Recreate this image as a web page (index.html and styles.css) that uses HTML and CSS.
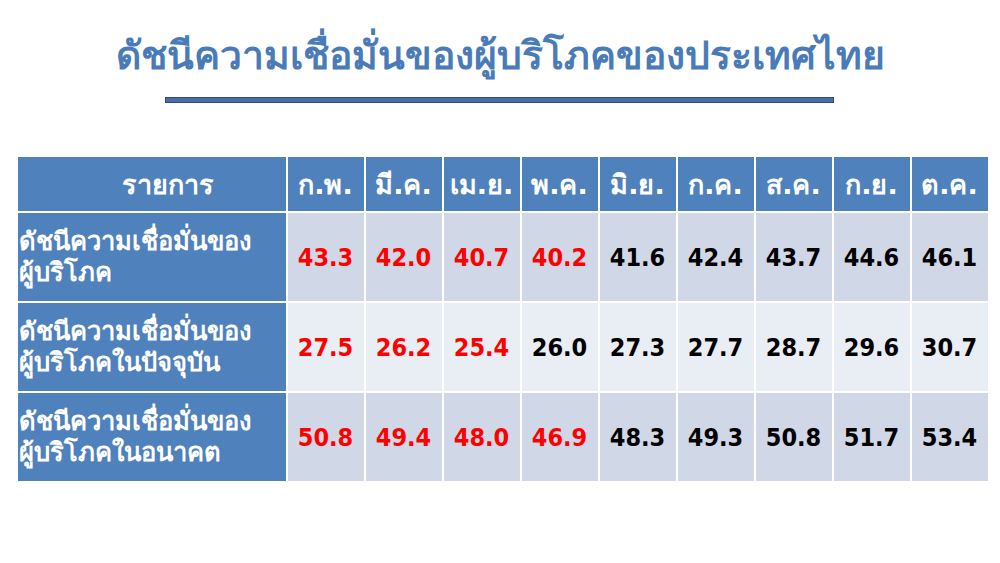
FILE: index.html
```html
<!DOCTYPE html>
<html lang="th">
<head>
<meta charset="utf-8">
<link rel="stylesheet" href="styles.css">
</head>
<body>
<div class="slide">
  <h1 class="title">ดัชนีความเชื่อมั่นของผู้บริโภคของประเทศไทย</h1>
  <div class="rule"></div>
  <table class="grid">
    <thead>
      <tr>
        <th class="label">รายการ</th>
        <th>ก.พ.</th><th>มี.ค.</th><th>เม.ย.</th><th>พ.ค.</th><th>มิ.ย.</th><th>ก.ค.</th><th>ส.ค.</th><th>ก.ย.</th><th>ต.ค.</th>
      </tr>
    </thead>
    <tbody>
      <tr class="dark">
        <th class="label">ดัชนีความเชื่อมั่นของ<br>ผู้บริโภค</th>
        <td class="red">43.3</td><td class="red">42.0</td><td class="red">40.7</td><td class="red">40.2</td><td>41.6</td><td>42.4</td><td>43.7</td><td>44.6</td><td>46.1</td>
      </tr>
      <tr class="light">
        <th class="label">ดัชนีความเชื่อมั่นของ<br>ผู้บริโภคในปัจจุบัน</th>
        <td class="red">27.5</td><td class="red">26.2</td><td class="red">25.4</td><td>26.0</td><td>27.3</td><td>27.7</td><td>28.7</td><td>29.6</td><td>30.7</td>
      </tr>
      <tr class="dark">
        <th class="label">ดัชนีความเชื่อมั่นของ<br>ผู้บริโภคในอนาคต</th>
        <td class="red">50.8</td><td class="red">49.4</td><td class="red">48.0</td><td class="red">46.9</td><td>48.3</td><td>49.3</td><td>50.8</td><td>51.7</td><td>53.4</td>
      </tr>
    </tbody>
  </table>
</div>
</body>
</html>
```

FILE: styles.css
```css
* { box-sizing: border-box; }
html, body { margin: 0; padding: 0; background: #ffffff; }
body { font-family: Tahoma, "DejaVu Sans", "Noto Sans", sans-serif; }
.slide {
  width: 1000px;
  height: 563px;
  padding-top: 30px;
  display: flex;
  flex-direction: column;
  align-items: center;
}
.title {
  margin: 0;
  font-size: 39px;
  line-height: 52px;
  font-weight: bold;
  color: #4a7bb9;
  letter-spacing: 0;
}
.rule {
  width: 669px;
  height: 6px;
  margin-top: 15px;
  background: #4a6fa8;
  border: 1px solid #2c4a7a;
  margin-left: -1px;
}
.grid {
  margin-top: 52px;
  width: 972px;
  border-collapse: collapse;
  table-layout: fixed;
  margin-left: 5px;
}
.grid th, .grid td {
  border: 2px solid #ffffff;
  padding: 0;
  text-align: center;
  font-weight: bold;
}
.grid thead th {
  height: 56px;
  background: #4f81bd;
  color: #ffffff;
  font-size: 27px;
  width: 78px;
}
.grid thead th.label {
  width: 270px;
  padding-left: 32px;
}
.grid tbody tr { height: 90px; }
.grid tbody th.label {
  background: #4f81bd;
  color: #ffffff;
  text-align: left;
  font-size: 25.5px;
  line-height: 31px;
  padding-left: 1px;
}
.grid td {
  font-family: "DejaVu Sans Condensed", "DejaVu Sans", sans-serif;
  font-size: 25px;
  color: #000000;
}
.grid tr.dark td { background: #d0d8e8; }
.grid tr.light td { background: #e9edf4; }
.grid td.red { color: #ff0000; }
```
